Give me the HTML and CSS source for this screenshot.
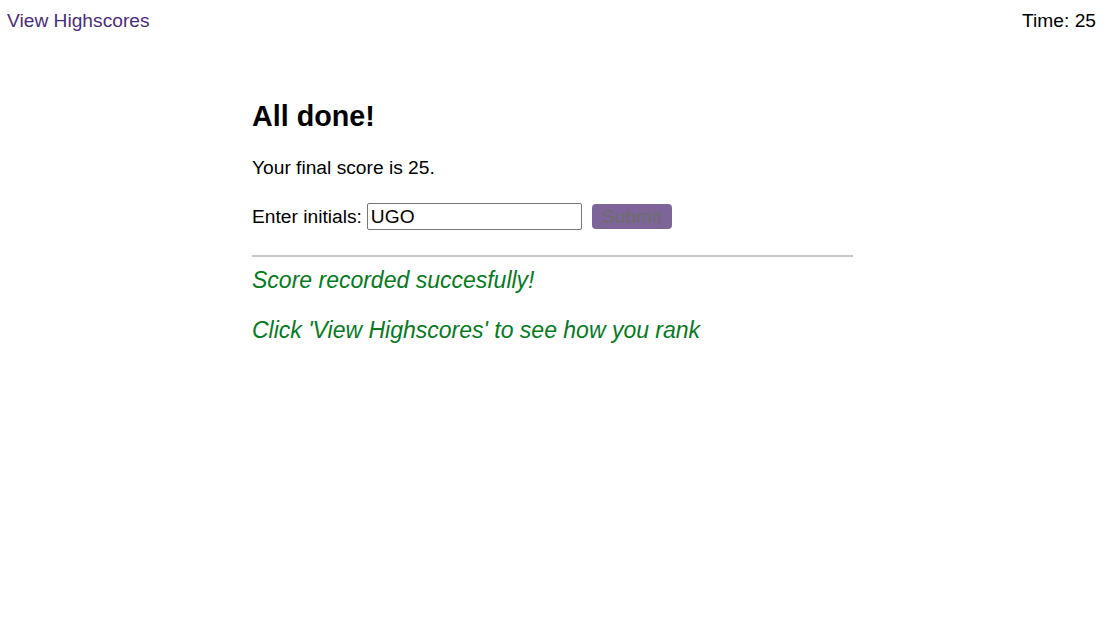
FILE: index.html
```html
<!DOCTYPE html>
<html>
<head>
<meta charset="utf-8">
<link rel="stylesheet" href="styles.css">
</head>
<body>
<header class="topbar">
  <a class="hs-link" href="#">View Highscores</a>
  <div class="timer">Time: 25</div>
</header>
<main class="panel">
  <h1 class="title">All done!</h1>
  <p class="score">Your final score is 25.</p>
  <form class="entry">
    <label class="entry-label" for="initials">Enter initials:</label>
    <input class="entry-input" id="initials" type="text" value="UGO">
    <button class="entry-btn" type="button" disabled>Submit</button>
  </form>
  <hr class="divider">
  <p class="msg">Score recorded succesfully!</p>
  <p class="msg">Click 'View Highscores' to see how you rank</p>
</main>
</body>
</html>
```
FILE: styles.css
```css
html, body {
  margin: 0;
  padding: 0;
  background: #fff;
}
body {
  font-family: "Liberation Sans", Arial, sans-serif;
  color: #000;
  font-size: 19.2px;
}
.topbar {
  display: flex;
  justify-content: space-between;
  align-items: center;
  height: 41px;
  padding: 0 9px 0 7px;
}
.hs-link {
  color: #4b2d78;
  text-decoration: none;
  font-size: 19.2px;
}
.timer {
  font-size: 19.2px;
}
.panel {
  width: 601px;
  margin: 0 auto;
  padding-top: 59px;
}
.title {
  font-size: 28.7px;
  font-weight: bold;
  line-height: 32px;
  margin: 0 0 25px 0;
}
.score {
  margin: 0 0 24px 0;
  line-height: 22px;
}
.entry {
  display: flex;
  align-items: center;
  margin: 0;
}
.entry-label {
  margin-right: 5px;
}
.entry-input {
  width: 215px;
  height: 27px;
  box-sizing: border-box;
  border: 1px solid #767676;
  border-radius: 2px;
  font-family: "Liberation Sans", Arial, sans-serif;
  font-size: 19.2px;
  padding: 0 3px;
  margin: 0 10px 0 0;
  color: #000;
}
.entry-btn {
  width: 80px;
  height: 25px;
  background: #7d6499;
  border: none;
  border-radius: 4px;
  color: #6c6f6a;
  font-family: "Liberation Sans", Arial, sans-serif;
  font-size: 19.2px;
  padding: 0;
}
.divider {
  border: none;
  border-top: 2px solid #c8c8c8;
  margin: 25px 0 10px 0;
}
.msg {
  color: #067a1e;
  font-style: italic;
  font-size: 23px;
  line-height: 26px;
  margin: 0 0 24px 0;
}
```
